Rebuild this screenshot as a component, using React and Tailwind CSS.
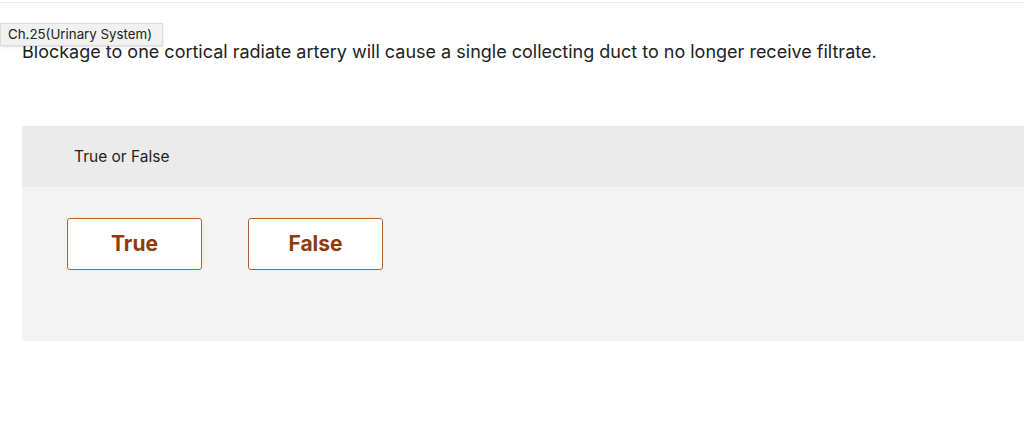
import React, { useState } from "react";

export default function App() {
  const [answer, setAnswer] = useState(null);

  return (
    <div className="relative w-[1024px] h-[436px] bg-white overflow-hidden font-['Inter','Liberation_Sans',sans-serif] text-[#222]">
      <div className="h-[3px] border-b border-[#ececec] mx-0" />

      {/* chapter tag sits over the question line */}
      <div className="absolute left-0 top-[23px] h-[23px] w-[163px] bg-[#f1f1f1] border border-[#dcdcdc] shadow-sm flex items-center pl-[7px] text-[13.3px] leading-none text-[#222] z-10">
        Ch.25(Urinary System)
      </div>

      <p className="pl-[22px] pt-[37px] text-[18px] leading-[24px]">
        Blockage to one cortical radiate artery will cause a single collecting duct to no longer receive filtrate.
      </p>

      <div className="ml-[22px] mt-[62px] w-[1010px] rounded-[3px] bg-[#f3f3f3] overflow-hidden">
        <div className="h-[61px] bg-[#ebebeb] flex items-center pl-[52px] text-[15.5px]">
          True or False
        </div>
        <div className="flex gap-[46px] pl-[45px] pt-[31px] pb-[71px]">
          {["True", "False"].map((label) => (
            <button
              key={label}
              onClick={() => setAnswer(label)}
              className={`w-[135px] h-[52px] rounded-[3px] border border-[#b0602c] text-[21px] font-bold text-[#8e3a0c] ${
                answer === label ? "bg-[#fdf3ec]" : "bg-white"
              }`}
            >
              {label}
            </button>
          ))}
        </div>
      </div>
    </div>
  );
}
